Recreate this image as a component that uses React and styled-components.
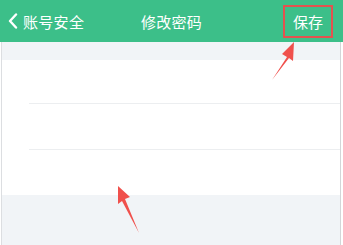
import React from "react";
import styled, { createGlobalStyle } from "styled-components";

const Global = createGlobalStyle`
  html, body { margin: 0; padding: 0; background: #ffffff; }
  body { font-family: "Noto Sans CJK SC", "Noto Sans", sans-serif; }
`;

const Page = styled.div`
  position: relative;
  width: 343px;
  height: 245px;
  overflow: hidden;
  display: flex;
  flex-direction: column;
  background: #ffffff;
`;

const Header = styled.header`
  height: 42px;
  flex: none;
  background: #3cbf89;
  display: grid;
  grid-template-columns: 1fr auto 1fr;
  align-items: center;
  color: #ffffff;
  font-size: 15px;
`;

const Back = styled.div`
  display: flex;
  align-items: center;
  gap: 5px;
  padding-left: 8px;
  letter-spacing: 0.3px;
`;

const Title = styled.div`
  letter-spacing: 0.3px;
`;

const Save = styled.div`
  justify-self: end;
  margin-right: 10px;
  width: 46px;
  height: 29px;
  border: 2px solid #e3524f;
  display: flex;
  align-items: center;
  justify-content: center;
  font-size: 15px;
`;

const Body = styled.div`
  flex: 1;
  display: flex;
  flex-direction: column;
  margin: 0 2px 0 1px;
  border-left: 1px solid #dcdee1;
  border-right: 1px solid #d3d5d8;
  background: #f1f4f7;
`;

const Gap = styled.div`
  height: 18px;
  background: #f1f4f7;
`;

const Form = styled.div`
  background: #ffffff;
  display: flex;
  flex-direction: column;
`;

const Row = styled.div`
  height: ${(p) => p.$h}px;
  box-sizing: border-box;
  margin-left: 27px;
  border-bottom: ${(p) => (p.$last ? "none" : "1px solid #eceef0")};
`;

const Overlay = styled.svg`
  position: absolute;
  left: 0;
  top: 0;
  pointer-events: none;
`;

export default function App() {
  return (
    <Page>
      <Global />
      <Header>
        <Back>
          <svg width="10" height="16" viewBox="0 0 10 16">
            <path d="M8 1.5 L2 8 L8 14.5" fill="none" stroke="#fff" strokeWidth="2.4" strokeLinecap="round" strokeLinejoin="round" />
          </svg>
          <span>账号安全</span>
        </Back>
        <Title>修改密码</Title>
        <Save>保存</Save>
      </Header>
      <Body>
        <Gap />
        <Form>
          <Row $h={44} />
          <Row $h={46} />
          <Row $h={45} $last />
        </Form>
      </Body>
      <Overlay width="343" height="245" viewBox="0 0 343 245">
        <polygon points="272,80 287,57 282,54 294,42 293,61 289,58" fill="#f0504c" />
        <polygon points="118,186 130,197 125,199 139,233 122,201 118,204" fill="#f0504c" />
      </Overlay>
    </Page>
  );
}
